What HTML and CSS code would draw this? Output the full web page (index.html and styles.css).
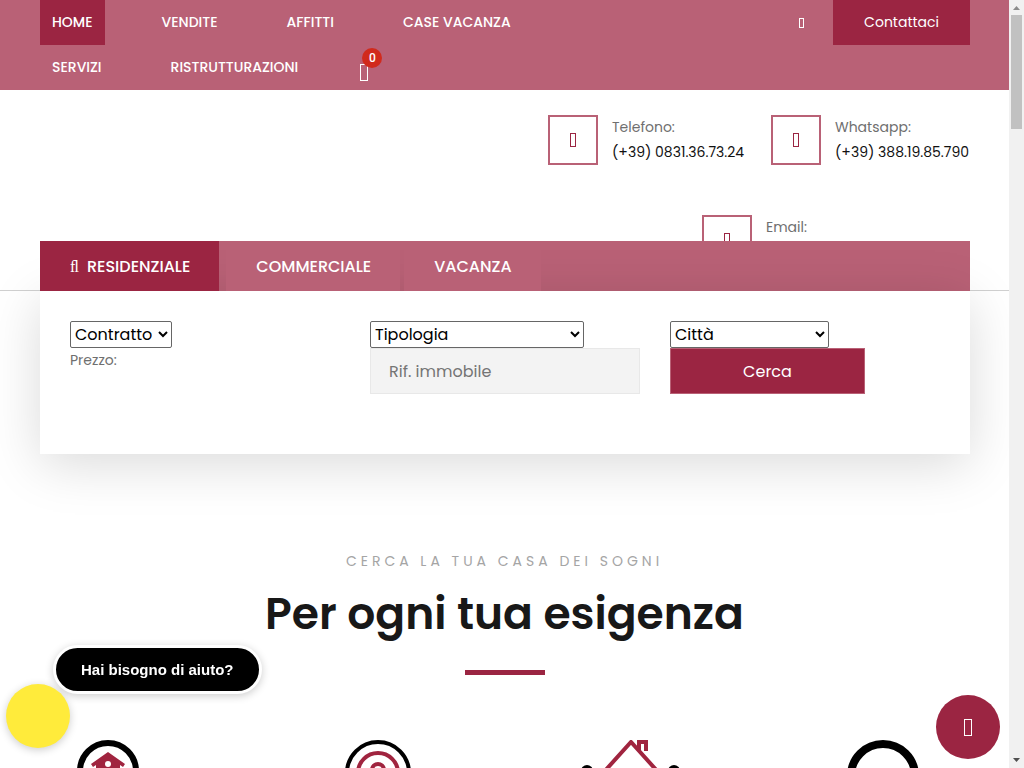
FILE: index.html
```html
<!DOCTYPE html>
<html lang="it">
<head>
<meta charset="utf-8">
<title>Immobiliare</title>
<meta name="viewport" content="width=device-width, initial-scale=1">
<link rel="stylesheet" href="styles.css">
</head>
<body>
<div class="page">
  <header>
    <div class="topbar">
      <div class="container topbar-inner">
        <nav class="nav" aria-label="Principale">
          <a class="nav-link active" href="#">HOME</a>
          <a class="nav-link" href="#">VENDITE</a>
          <a class="nav-link" href="#">AFFITTI</a>
          <a class="nav-link" href="#">CASE VACANZA</a>
          <a class="nav-link" href="#">SERVIZI</a>
          <a class="nav-link" href="#">RISTRUTTURAZIONI</a>
          <a class="cart" href="#" aria-label="Preferiti"><span class="glyph glyph-large"></span><span class="badge">0</span></a>
        </nav>
        <div class="topbar-side">
          <a class="social" href="#" aria-label="Social"><span class="glyph glyph-small"></span></a>
          <a class="contact-link" href="#">Contattaci</a>
        </div>
      </div>
    </div>
    <div class="info">
      <div class="container">
        <div class="info-list">
          <div class="info-item">
            <span class="info-icon"><span class="glyph"></span></span>
            <div class="info-text"><span>Telefono:</span><a href="#">(+39) 0831.36.73.24</a></div>
          </div>
          <div class="info-item">
            <span class="info-icon"><span class="glyph"></span></span>
            <div class="info-text"><span>Whatsapp:</span><a href="#">(+39) 388.19.85.790</a></div>
          </div>
          <div class="info-item info-email">
            <span class="info-icon"><span class="glyph"></span></span>
            <div class="info-text"><span>Email:</span></div>
          </div>
        </div>
      </div>
    </div>
  </header>
  <main>
    <section class="container search">
      <div class="tabs">
        <button class="tab active" type="button"><span class="tab-glyph">ﬂ</span>RESIDENZIALE</button>
        <button class="tab" type="button">COMMERCIALE</button>
        <button class="tab" type="button">VACANZA</button>
      </div>
      <form class="search-form">
        <div class="field">
          <select class="select select-contract" aria-label="Contratto"><option>Contratto</option></select>
          <span class="price">Prezzo:</span>
        </div>
        <div class="field">
          <select class="select select-type" aria-label="Tipologia"><option>Tipologia</option></select>
          <input class="reference" type="text" placeholder="Rif. immobile" aria-label="Rif. immobile">
        </div>
        <div class="field">
          <select class="select select-city" aria-label="Città"><option>Città</option></select>
          <button class="submit" type="button">Cerca</button>
        </div>
      </form>
    </section>
    <section class="intro">
      <p class="eyebrow">CERCA LA TUA CASA DEI SOGNI</p>
      <h1>Per ogni tua esigenza</h1>
      <div class="rule"></div>
    </section>
    <section class="services">
      <svg width="98" height="64" viewBox="0 0 98 64" aria-hidden="true">
        <circle cx="31" cy="31" r="28" fill="none" stroke="#000" stroke-width="6"/>
        <path d="M31 12 48 24 46 27 43 25V42H19V25L16 27 14 24Z" fill="#a0243f"/>
        <circle cx="31" cy="24" r="3" fill="#fff"/>
      </svg>
      <svg width="66" height="66" viewBox="0 0 66 66" aria-hidden="true">
        <circle cx="33" cy="33" r="31" fill="none" stroke="#000" stroke-width="4"/>
        <circle cx="33" cy="33" r="20" fill="none" stroke="#a0243f" stroke-width="4"/>
        <circle cx="33" cy="30" r="6" fill="none" stroke="#a0243f" stroke-width="4"/>
      </svg>
      <svg width="100" height="66" viewBox="0 0 100 66" aria-hidden="true">
        <path d="M22 33 50 2 78 33M58 10V2H65V11" fill="none" stroke="#a0243f" stroke-width="4"/>
        <circle cx="6" cy="31" r="6"/><circle cx="93" cy="31" r="6"/>
      </svg>
      <svg width="72" height="72" viewBox="0 0 72 72" aria-hidden="true">
        <circle cx="36" cy="36" r="32" fill="none" stroke="#000" stroke-width="8"/>
      </svg>
    </section>
  </main>
  <button class="help" type="button">Hai bisogno di aiuto?</button>
  <button class="chat" type="button" aria-label="Chat"></button>
  <button class="to-top" type="button" aria-label="Torna su"><span class="glyph glyph-large"></span></button>
</div>
<div class="scrollbar" aria-hidden="true">
  <svg width="15" height="15" viewBox="0 0 15 15"><path d="M4 10 7.500 6 11 10Z" fill="#8b8b8b"/></svg>
  <div class="track"><div class="thumb"></div></div>
  <svg width="15" height="15" viewBox="0 0 15 15"><path d="M4 5 7.500 9 11 5Z" fill="#505050"/></svg>
</div>
</body>
</html>
```
FILE: styles.css
```css
:root {
  --brand: #9b2542;
  --brand-soft: #b96176;
}
* { box-sizing: border-box; }
body {
  margin: 0;
  display: flex;
  height: 100vh;
  overflow: hidden;
  background: #fff;
  color: #6f6f6f;
  font: 14px/25px Poppins, Inter, sans-serif;
}
a { color: inherit; text-decoration: none; }
button, input, select { font-family: inherit; }
button { cursor: pointer; }
.page { flex: 1; min-width: 0; overflow: hidden; }
.container { margin: 0 39px 0 40px; }

.glyph { display: inline-block; width: 6px; height: 14px; border: 1px solid currentColor; }
.glyph-small { width: 5px; height: 10px; }
.glyph-large { width: 8px; height: 17px; }

.topbar { background: var(--brand-soft); color: #fff; }
.topbar-inner { display: flex; justify-content: space-between; }
.nav { display: flex; flex-wrap: wrap; column-gap: 45px; width: 60%; }
.nav-link { padding: 0 12px; line-height: 45px; font-weight: 500; }
.nav-link.active { background: var(--brand); }
.cart { position: relative; display: flex; align-items: center; height: 45px; padding: 9px 0 0 5px; width: 28px; }
.badge {
  position: absolute;
  top: 3px;
  left: 7px;
  width: 20px;
  height: 20px;
  border-radius: 50%;
  background: #d12a1c;
  font: 500 12px/20px Roboto, sans-serif;
  text-align: center;
}
.topbar-side { display: flex; align-items: flex-start; }
.social { display: flex; align-items: center; height: 45px; padding-right: 29px; }
.contact-link { padding: 0 31px; background: var(--brand); line-height: 45px; }

.info { border-bottom: 1px solid #d0d0d0; padding: 25px 0; }
.info-list {
  display: flex;
  flex-wrap: wrap;
  justify-content: flex-end;
  gap: 50px 24px;
  width: 50%;
  margin-left: auto;
}
.info-item { display: flex; gap: 14px; height: 50px; }
.info-email { width: 268px; }
.info-icon {
  display: flex;
  align-items: center;
  justify-content: center;
  width: 50px;
  height: 50px;
  border: 2px solid var(--brand-soft);
  color: var(--brand);
}
.info-text { display: flex; flex-direction: column; min-width: 135px; }
.info-text a { color: #111; }

.search { position: relative; margin-top: -50px; }
.tabs { display: flex; background: var(--brand-soft); }
.tab {
  position: relative;
  z-index: 1;
  height: 50px;
  margin-right: 4px;
  padding: 0 29px 0 30px;
  border: 0;
  background: var(--brand-soft);
  color: #fff;
  font-size: 16px;
  font-weight: 500;
}
.tab.active { margin-right: 7px; background: var(--brand); }
.tab-glyph { margin-right: 8px; font: 16px "Liberation Serif", serif; }
.search-form {
  display: grid;
  grid-template-columns: repeat(3, 1fr);
  gap: 30px;
  padding: 30px 30px 60px;
  background: #fff;
  box-shadow: 0 10px 50px rgba(0, 0, 0, .15);
}
.field { display: flex; flex-direction: column; align-items: flex-start; }
.select {
  height: 27px;
  padding: 0;
  border: 1px solid #666;
  border-radius: 2px;
  background-color: #fff;
  color: #000;
  font-size: 16px;
}
.select-contract { width: 102px; }
.select-type { width: 214px; }
.select-city { width: 159px; }
.reference {
  width: 100%;
  height: 46px;
  padding: 0 18px;
  border: 1px solid #e8e8e8;
  background: #f3f3f3;
  color: #757575;
  font-size: 16px;
}
.submit {
  width: 195px;
  height: 46px;
  border: 1px solid var(--brand-soft);
  background: var(--brand);
  color: #fff;
  font-size: 16px;
}

.intro { padding-top: 95px; text-align: center; }
.eyebrow { margin: 0; color: #a5a5a5; letter-spacing: 4px; }
h1 { margin: 10px 0 26px; color: #181818; font-size: 44px; line-height: 60px; font-weight: 600; }
.rule { width: 80px; height: 5px; margin: 0 auto; background: var(--brand); }
.services {
  display: grid;
  grid-template-columns: repeat(4, 1fr);
  justify-items: center;
  margin-top: 65px;
}

.help {
  position: fixed;
  left: 53px;
  bottom: 74px;
  height: 49px;
  padding: 0 25px;
  border: 3px solid #fff;
  border-radius: 25px;
  background: #000;
  color: #fff;
  font: bold 15px "Liberation Sans", sans-serif;
  box-shadow: 0 2px 8px rgba(0, 0, 0, .2);
}
.chat, .to-top { position: fixed; width: 64px; height: 64px; border: 0; border-radius: 50%; }
.chat { left: 6px; bottom: 20px; background: #ffeb3b; box-shadow: 0 2px 8px rgba(0, 0, 0, .2); }
.to-top {
  display: flex;
  align-items: center;
  justify-content: center;
  right: 24px;
  bottom: 9px;
  background: var(--brand);
  color: #fff;
}

.scrollbar { display: flex; flex-direction: column; width: 15px; background: #f1f1f1; }
.track { flex: 1; padding: 0 2px; }
.thumb { height: 114px; background: #c1c1c1; }
```
